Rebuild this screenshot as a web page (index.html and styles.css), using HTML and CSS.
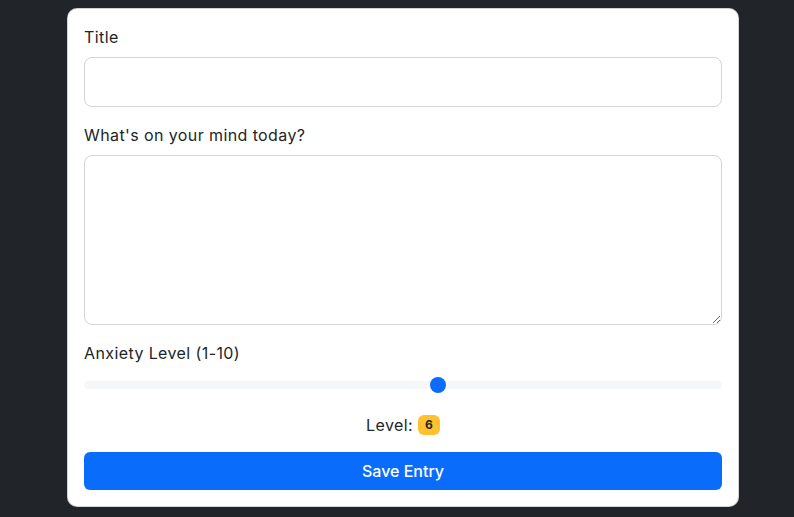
FILE: index.html
```html
<!DOCTYPE html>
<html lang="en">
<head>
<meta charset="utf-8">
<title>Journal Entry</title>
<link rel="stylesheet" href="styles.css">
</head>
<body>
<div class="page">
  <form class="card">
    <div class="field">
      <label class="label" for="title">Title</label>
      <input class="input" id="title" type="text">
    </div>
    <div class="field">
      <label class="label" for="mind">What's on your mind today?</label>
      <textarea class="input textarea" id="mind"></textarea>
    </div>
    <div class="field">
      <label class="label" for="level">Anxiety Level (1-10)</label>
      <input class="range" id="level" type="range" min="1" max="10" value="6">
    </div>
    <div class="field level-row">
      <span>Level:</span>
      <span class="badge">6</span>
    </div>
    <button class="btn" type="button">Save Entry</button>
  </form>
</div>
</body>
</html>
```

FILE: styles.css
```css
* { box-sizing: border-box; }
html, body { margin: 0; height: 100%; }
body {
  background: #212529;
  font-family: "Inter", "Open Sans", sans-serif;
  color: #212529;
  font-size: 16px;
  line-height: 24px;
  letter-spacing: 0.4px;
}
.page {
  padding: 8px 55px 0 67px;
}
.card {
  background: #fff;
  border: 1px solid rgba(0,0,0,.175);
  border-radius: 10px;
  padding: 16px;
  display: flex;
  flex-direction: column;
}
.field {
  display: flex;
  flex-direction: column;
  margin-bottom: 16px;
}
.label {
  margin-bottom: 8px;
  font-size: 16px;
  line-height: 24px;
}
.input {
  display: block;
  width: 100%;
  height: 50px;
  border: 1px solid #d3d4d9;
  border-radius: 8px;
  background: #fff;
  font: inherit;
  padding: 8px 16px;
  outline: none;
}
.textarea {
  height: 170px;
  resize: vertical;
}
.range {
  -webkit-appearance: none;
  appearance: none;
  width: 100%;
  height: 24px;
  margin: 0;
  padding: 0;
  background: transparent;
}
.range::-webkit-slider-runnable-track {
  height: 8px;
  background: #f6f7f8;
  border-radius: 16px;
}
.range::-webkit-slider-thumb {
  -webkit-appearance: none;
  appearance: none;
  width: 16px;
  height: 16px;
  margin-top: -4px;
  border-radius: 50%;
  background: #0a6cfa;
  border: 0;
}
.level-row {
  flex-direction: row;
  justify-content: center;
  align-items: center;
  gap: 5px;
  margin-bottom: 15px;
}
.badge {
  display: inline-block;
  background: #ffc22e;
  color: #212529;
  font-size: 12px;
  font-weight: 700;
  line-height: 1;
  padding: 4px 7px;
  border-radius: 6px;
  height: 20px;
  letter-spacing: 0;
}
.btn {
  display: block;
  width: 100%;
  height: 38px;
  border: 0;
  border-radius: 6px;
  background: #0a6cfa;
  color: #fff;
  font: inherit;
  font-weight: 500;
  cursor: pointer;
}
```
